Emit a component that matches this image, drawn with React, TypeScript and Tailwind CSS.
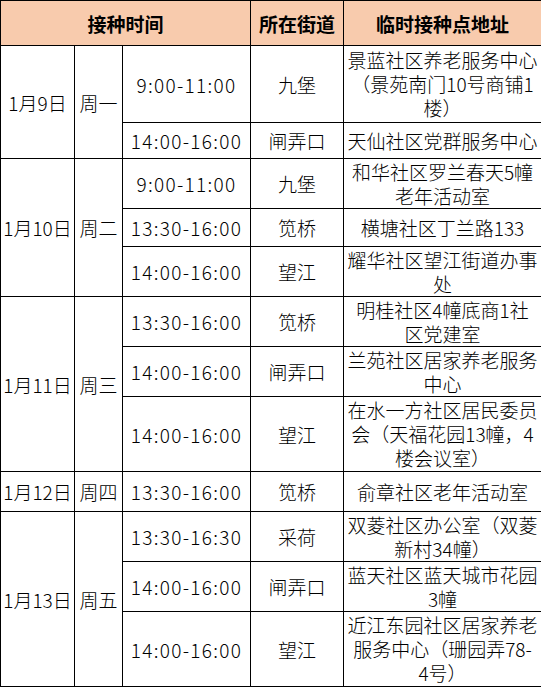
import React from 'react';

type Slot = { time: string; street: string; addr: string[]; h: number };
type Day = { date: string; week: string; slots: Slot[] };

const days: Day[] = [
  {
    date: '1月9日',
    week: '周一',
    slots: [
      { time: '9:00-11:00', street: '九堡', addr: ['景蓝社区养老服务中心', '（景苑南门10号商铺1', '楼）'], h: 77 },
      { time: '14:00-16:00', street: '闸弄口', addr: ['天仙社区党群服务中心'], h: 36 },
    ],
  },
  {
    date: '1月10日',
    week: '周二',
    slots: [
      { time: '9:00-11:00', street: '九堡', addr: ['和华社区罗兰春天5幢', '老年活动室'], h: 50 },
      { time: '13:30-16:00', street: '笕桥', addr: ['横塘社区丁兰路133'], h: 38 },
      { time: '14:00-16:00', street: '望江', addr: ['耀华社区望江街道办事', '处'], h: 50 },
    ],
  },
  {
    date: '1月11日',
    week: '周三',
    slots: [
      { time: '13:30-16:00', street: '笕桥', addr: ['明桂社区4幢底商1社', '区党建室'], h: 50 },
      { time: '14:00-16:00', street: '闸弄口', addr: ['兰苑社区居家养老服务', '中心'], h: 50 },
      { time: '14:00-16:00', street: '望江', addr: ['在水一方社区居民委员', '会（天福花园13幢，4', '楼会议室）'], h: 75 },
    ],
  },
  {
    date: '1月12日',
    week: '周四',
    slots: [{ time: '13:30-16:00', street: '笕桥', addr: ['俞章社区老年活动室'], h: 40 }],
  },
  {
    date: '1月13日',
    week: '周五',
    slots: [
      { time: '13:30-16:30', street: '采荷', addr: ['双菱社区办公室（双菱', '新村34幢）'], h: 50 },
      { time: '14:00-16:00', street: '闸弄口', addr: ['蓝天社区蓝天城市花园', '3幢'], h: 50 },
      { time: '14:00-16:00', street: '望江', addr: ['近江东园社区居家养老', '服务中心（珊园弄78-', '4号）'], h: 75 },
    ],
  },
];

const cell = 'border border-black text-center align-middle p-0 overflow-hidden';

export default function App() {
  return (
    <div className="w-[541px] h-[687px] bg-white text-black" style={{ fontFamily: '"Noto Sans CJK SC", "Noto Sans", sans-serif' }}>
      <table className="w-[541px] table-fixed border-collapse text-[19px] leading-[23px] font-light">
        <colgroup>
          <col className="w-[74px]" />
          <col className="w-[48px]" />
          <col className="w-[128px]" />
          <col className="w-[93px]" />
          <col className="w-[198px]" />
        </colgroup>
        <thead>
          <tr className="h-[45px] bg-[#f8cbad]">
            <th colSpan={3} className={`${cell} font-bold`}>接种时间</th>
            <th className={`${cell} font-bold`}>所在街道</th>
            <th className={`${cell} font-bold`}>临时接种点地址</th>
          </tr>
        </thead>
        <tbody>
          {days.map((d) =>
            d.slots.map((s, i) => (
              <tr key={d.date + i} style={{ height: s.h }}>
                {i === 0 && (
                  <>
                    <td rowSpan={d.slots.length} className={`${cell} whitespace-nowrap`}>{d.date}</td>
                    <td rowSpan={d.slots.length} className={`${cell} whitespace-nowrap`}>{d.week}</td>
                  </>
                )}
                <td className={`${cell} whitespace-nowrap tabular-nums tracking-[1.3px]`}>{s.time}</td>
                <td className={`${cell} whitespace-nowrap`}>{s.street}</td>
                <td className={`${cell} whitespace-nowrap`}>
                  {s.addr.map((l, j) => (
                    <div key={j} className="leading-[24px]">{l}</div>
                  ))}
                </td>
              </tr>
            ))
          )}
        </tbody>
      </table>
    </div>
  );
}
